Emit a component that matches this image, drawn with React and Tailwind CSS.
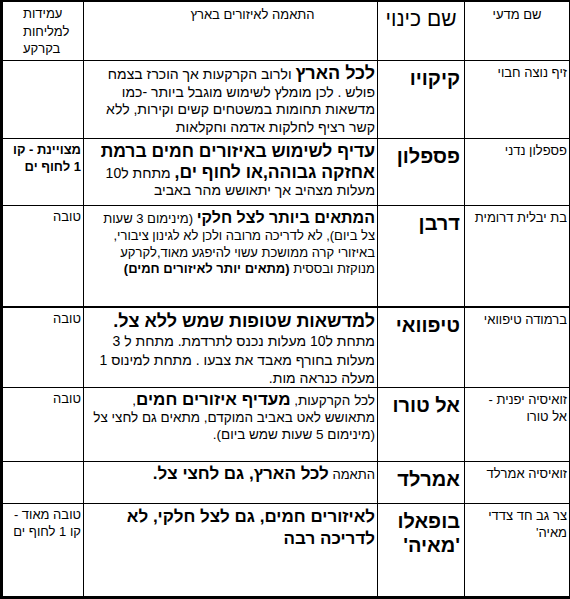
// טבלת זני דשא: שם מדעי, שם כינוי, התאמה לאיזורים ועמידות למליחות

const big = "text-[17px] font-bold leading-[20px]";

const rows = [
  {
    sci: "זיף נוצה חבוי",
    name: "קיקויו",
    fit: (
      <span className="text-[14px]">
        <span className="text-[18px] font-bold leading-[20px]">לכל הארץ</span> ולרוב הקרקעות אך הוכרז בצמח
        <br />
        פולש . לכן מומלץ לשימוש מוגבל ביותר -כמו
        <br />
        מדשאות תחומות במשטחים קשים וקירות, ללא
        <br />
        קשר רציף לחלקות אדמה וחקלאות
      </span>
    ),
    salt: null,
  },
  {
    sci: "פספלון נדני",
    name: "פספלון",
    fit: (
      <span className="text-[14px]">
        <span className="text-[17.5px] font-bold leading-[20px]">עדיף לשימוש באיזורים חמים ברמת</span>
        <br />
        <span className="text-[17.5px] font-bold leading-[20px]">אחזקה גבוהה,או לחוף ים,</span> מתחת ל10
        <br />
        מעלות מצהיב אך יתאושש מהר באביב
      </span>
    ),
    salt: (
      <span className="font-bold">
        מצויינת - קו
        <br />1 לחוף ים
      </span>
    ),
  },
  {
    sci: "בת יבלית דרומית",
    name: "דרבן",
    fit: (
      <>
        <span className="text-[16px] font-bold leading-[20px]">המתאים ביותר לצל חלקי</span> (מינימום 3 שעות
        <br />
        צל ביום), לא לדריכה מרובה ולכן לא לגינון ציבורי,
        <br />
        באיזורי קרה ממושכת עשוי להיפגע מאוד,לקרקע
        <br />
        מנוקזת ובססית <span className="font-bold">(מתאים יותר לאיזורים חמים)</span>
      </>
    ),
    salt: "טובה",
    thick: true,
  },
  {
    sci: "ברמודה טיפוואי",
    name: "טיפוואי",
    fit: (
      <>
        <span className="text-[18px] font-bold leading-[22px]">למדשאות שטופות שמש ללא צל.</span>
        <br />
        <span className="text-[14px] leading-[18px]">
          מתחת ל10 מעלות נכנס לתרדמת. מתחת ל 3
          <br />
          מעלות בחורף מאבד את צבעו . מתחת למינוס 1
          <br />
          מעלה כנראה מות.
        </span>
      </>
    ),
    salt: "טובה",
  },
  {
    sci: (
      <>
        זואיסיה יפנית -
        <br />
        אל טורו
      </>
    ),
    name: "אל טורו",
    fit: (
      <span className="text-[13.5px]">
        לכל הקרקעות, <span className={big}>מעדיף איזורים חמים</span>,
        <br />
        מתאושש לאט באביב המוקדם, מתאים גם לחצי צל
        <br />
        (מינימום 5 שעות שמש ביום).
      </span>
    ),
    salt: "טובה",
  },
  {
    sci: "זואיסיה אמרלד",
    name: "אמרלד",
    fit: (
      <>
        התאמה <span className={big}>לכל הארץ, גם לחצי צל.</span>
      </>
    ),
    salt: null,
  },
  {
    sci: (
      <>
        צר גב חד צדדי
        <br />
        מאיה'
      </>
    ),
    name: (
      <>
        בופאלו
        <br />
        'מאיה'
      </>
    ),
    fit: (
      <span className="text-[17px] font-bold leading-[22px]">
        לאיזורים חמים, גם לצל חלקי, לא
        <br />
        לדריכה רבה
      </span>
    ),
    salt: (
      <>
        טובה מאוד -
        <br />
        קו 1 לחוף ים
      </>
    ),
    last: true,
  },
];

function Cell({ children, className = "", edge = false, row = {} }) {
  const bottom = row.last ? "" : row.thick ? "border-b-2" : "border-b";
  return (
    <div
      className={`border-black overflow-hidden ${edge ? "" : "border-l"} ${bottom} ${className}`}
    >
      {children}
    </div>
  );
}

export default function App() {
  return (
    <div className="bg-white w-[570px] h-[599px]">
      <div
        dir="rtl"
        className="grid grid-cols-[105px_87px_294px_80px] grid-rows-[59px_78px_67px_102px_80px_74px_42px_92px] w-[570px] h-[599px] border-t-2 border-r border-l-[3px] border-b-[3px] border-black bg-white text-black font-['Liberation_Sans','DejaVu_Sans',sans-serif] text-[13px] leading-[16.5px]"
      >
        {/* כותרות */}
        <Cell className="text-center pt-[5px]">שם מדעי</Cell>
        <Cell className="text-center text-[21px] leading-[26px] pt-[4px]">שם כינוי</Cell>
        <Cell className="text-center pl-[44px] pt-[5px]">התאמה לאיזורים בארץ</Cell>
        <Cell edge className="text-left pl-[20px] pt-[3px] leading-[17.5px]">
          עמידות
          <br />
          למליחות
          <br />
          בקרקע
        </Cell>

        {rows.map((r, i) => (
          <div key={i} className="contents">
            <Cell row={r} className="text-right pr-[2px] pt-[4px]">
              {r.sci}
            </Cell>
            <Cell row={r} className="text-right pr-[4px] pt-[5px] text-[20px] font-bold leading-[24px]">
              {r.name}
            </Cell>
            <Cell row={r} className="text-right pr-[2px] pt-[2px] whitespace-nowrap">
              {r.fit}
            </Cell>
            <Cell row={r} edge className="text-right pr-[2px] pt-[3px]">
              {r.salt}
            </Cell>
          </div>
        ))}
      </div>
    </div>
  );
}
